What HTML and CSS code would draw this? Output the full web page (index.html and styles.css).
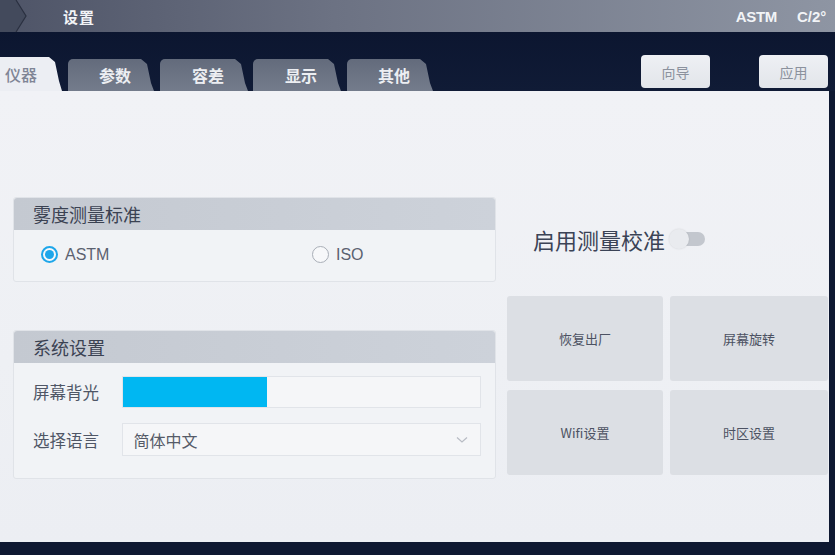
FILE: index.html
```html
<!DOCTYPE html>
<html lang="zh">
<head>
<meta charset="utf-8">
<link rel="stylesheet" href="styles.css">
</head>
<body>
<div class="screen">
  <header class="topbar">
    <svg class="chev" width="30" height="32" viewBox="0 0 30 32"><path d="M0 0 H16 L26 16 L16 32 H0 Z" fill="#434a5c"/><path d="M16 0 L26 16 L16 32" fill="none" stroke="#2a3040" stroke-width="1.2"/></svg>
    <span class="title">设置</span>
    <span class="spacer"></span>
    <span class="std">ASTM</span>
    <span class="mode">C/2°</span>
  </header>
  <nav class="navband">
    <div class="tabs">
      <div class="tab active">仪器</div>
      <div class="tab t2">参数</div>
      <div class="tab t3">容差</div>
      <div class="tab t4">显示</div>
      <div class="tab t5">其他</div>
    </div>
    <div class="actions">
      <button class="act">向导</button>
      <button class="act">应用</button>
    </div>
  </nav>
  <div class="frame">
    <main class="panel">
      <section class="left">
        <div class="group g1">
          <div class="ghead">雾度测量标准</div>
          <div class="gbody radios">
            <label class="radio"><span class="dot on"></span>ASTM</label>
            <label class="radio"><span class="dot"></span>ISO</label>
          </div>
        </div>
        <div class="group g2">
          <div class="ghead">系统设置</div>
          <div class="gbody rows">
            <div class="row"><span class="lbl">屏幕背光</span><div class="bar"><div class="fill" style="width:144px"></div></div></div>
            <div class="row"><span class="lbl">选择语言</span><div class="select"><span>简体中文</span><svg width="12" height="8" viewBox="0 0 12 8"><path d="M1 1.5 L6 6 L11 1.5" fill="none" stroke="#b8bcc4" stroke-width="1.2"/></svg></div></div>
          </div>
        </div>
      </section>
      <section class="right">
        <div class="calib"><span>启用测量校准</span><span class="toggle"><span class="knob"></span></span></div>
        <div class="grid">
          <button class="tile">恢复出厂</button>
          <button class="tile">屏幕旋转</button>
          <button class="tile">Wifi设置</button>
          <button class="tile">时区设置</button>
        </div>
      </section>
    </main>
  </div>
</div>
</body>
</html>
```
FILE: styles.css
```css
* { box-sizing: border-box; }
html, body { margin: 0; padding: 0; }
body {
  width: 835px; height: 555px; overflow: hidden;
  background: #0e1831;
  font-family: "Noto Sans CJK SC", "Noto Sans", sans-serif;
}
.screen { width: 835px; height: 555px; display: flex; flex-direction: column; }
.topbar {
  height: 32px; display: flex; align-items: center;
  background: linear-gradient(90deg, #4e5467 0%, #6c7283 40%, #8e95a3 100%);
  color: #f2f4f7; font-weight: 700;
}
.chev { flex: none; align-self: stretch; }
.title { margin-left: 33px; font-size: 15px; letter-spacing: 1px; }
.spacer { flex: 1; }
.std { font-family: "Liberation Sans", sans-serif; font-size: 15px; margin-right: 20px; letter-spacing: -0.3px; }
.mode { font-family: "Liberation Sans", sans-serif; font-size: 15px; width: 38px; white-space: nowrap; }
.navband {
  height: 59px; display: flex; justify-content: space-between; align-items: flex-end;
  background: linear-gradient(180deg, #0c1630 0%, #101b36 100%);
}
.tabs { display: flex; align-items: flex-end; height: 34px; }
.tab {
  height: 32px; display: flex; align-items: center; justify-content: center;
  font-size: 16px; font-weight: 700; color: #eceef2;
  background: linear-gradient(180deg, #636b7c 0%, #747c8c 100%);
  border-radius: 5px 10px 0 0;
  clip-path: polygon(0 0, calc(100% - 13px) 0, calc(100% - 7px) 5px, calc(100% - 3px) 24px, 100% 100%, 0 100%);
  margin-left: 6px;
  padding-left: 8px;
}
.tab.active {
  width: 62px; height: 34px; margin-left: 0;
  background: #eceef3; color: #7f8595; font-weight: 500;
  border-radius: 0 10px 0 0;
  justify-content: flex-start; padding-left: 5px;
}
.t2 { width: 86px; }
.t3 { width: 88px; margin-left: 6px; }
.t4 { width: 88px; margin-left: 5px; }
.t5 { width: 86px; margin-left: 6px; }
.actions { display: flex; gap: 49px; padding-right: 7px; padding-bottom: 3px; }
.act {
  width: 69px; height: 33px; border: none; border-radius: 4px;
  background: linear-gradient(180deg, #eef0f4, #e2e5ea);
  color: #8b919d; font-size: 14px; font-family: inherit;
}
.frame { flex: 1; padding: 0 6px 13px 0; }
.panel {
  height: 100%; display: flex; gap: 11px;
  background: linear-gradient(180deg, #f1f2f6 0%, #eef0f4 60%, #eceef3 100%);
  padding: 106px 0 0 13px;
}
.left { width: 483px; display: flex; flex-direction: column; }
.group { border: 1px solid #e0e3e8; border-radius: 3px; background: #f1f3f6; }
.ghead {
  height: 32px; display: flex; align-items: center; padding-left: 19px;
  background: linear-gradient(90deg, #c4c9d1, #cdd2da);
  color: #3b4252; font-size: 18px; border-radius: 3px 3px 0 0;
}
.radios { height: 51px; display: flex; align-items: center; padding-left: 27px; padding-bottom: 2px; }
.radio { flex: none; display: flex; align-items: center; gap: 7px; font-family: "Liberation Sans", "Noto Sans", sans-serif; font-size: 16px; color: #5b6170; width: 271px; }
.dot {
  width: 17px; height: 17px; border-radius: 50%; border: 1.5px solid #a9aeb7; background: #f7f8fa;
  display: inline-block; position: relative;
}
.dot.on { border: 2px solid #1ea6ea; }
.dot.on::after {
  content: ""; position: absolute; left: 2px; top: 2px; width: 9px; height: 9px; border-radius: 50%; background: #1ea6ea;
}
.g2 { margin-top: 48px; }
.rows { padding: 13px 14px 22px 19px; display: flex; flex-direction: column; gap: 15px; }
.row { display: flex; align-items: center; }
.lbl { width: 89px; font-size: 16.5px; color: #4f5666; }
.bar { width: 360px; height: 32px; border: 1px solid #e1e4e9; background: #f5f6f8; }
.fill { height: 100%; background: #00b7f2; }
.select {
  width: 361px; height: 33px; border: 1px solid #e1e4e9; background: #f5f6f8;
  display: flex; align-items: center; justify-content: space-between; padding: 0 12px 0 11px;
  font-size: 16px; color: #555b68;
}
.right { width: 322px; display: flex; flex-direction: column; }
.calib {
  display: flex; align-items: center; margin-top: 28px; padding-left: 26px;
  font-size: 22px; color: #3b4356; height: 28px;
}
.toggle { width: 34px; height: 14px; border-radius: 7px; background: #c3c7ce; position: relative; margin-left: 6px; }
.knob {
  position: absolute; left: -2px; top: -3px; width: 20px; height: 20px; border-radius: 50%;
  background: #e9ebef; box-shadow: 0 0 2px rgba(0,0,0,0.12);
}
.grid {
  margin-top: 43px; display: grid; grid-template-columns: 156px 158px; grid-auto-rows: 85px;
  column-gap: 7px; row-gap: 9px;
}
.tile {
  border: none; border-radius: 3px; background: #dcdfe4;
  font-family: inherit; font-size: 13px; color: #4c5262;
}
```
